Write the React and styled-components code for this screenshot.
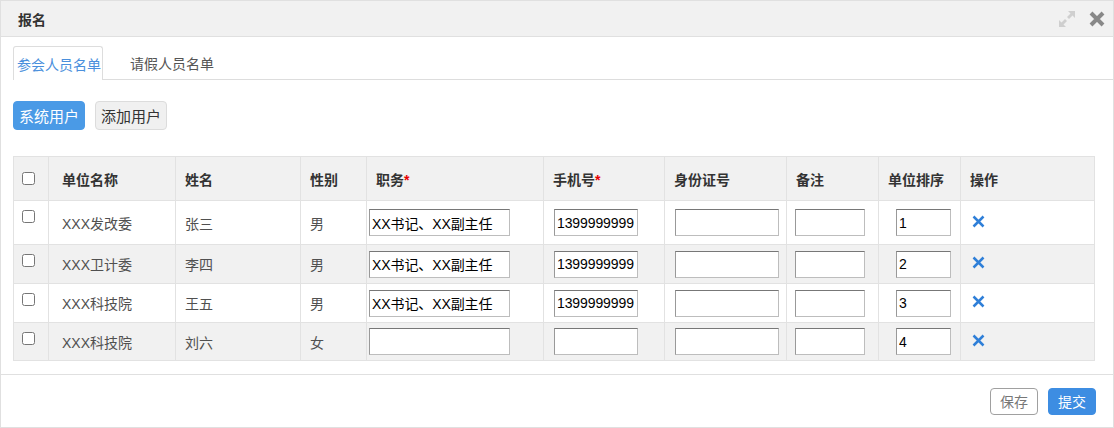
import React from "react";
import styled, { createGlobalStyle } from "styled-components";

const GlobalStyle = createGlobalStyle`
  body {
    margin: 0;
    font-family: "Liberation Sans", "Noto Sans CJK SC", sans-serif;
    background: #fff;
  }
`;

const Dialog = styled.div`
  width: 1114px;
  height: 428px;
  box-sizing: border-box;
  border: 1px solid #e0e0e0;
  display: flex;
  flex-direction: column;
  background: #fff;
`;

const Header = styled.div`
  height: 35px;
  background: #f1f1f1;
  border-bottom: 1px solid #e0e0e0;
  display: flex;
  align-items: center;
  justify-content: space-between;
  padding: 0 7px 0 17px;
`;

const Title = styled.div`
  font-size: 14px;
  font-weight: bold;
  color: #333;
`;

const HeaderTools = styled.div`
  display: flex;
  align-items: center;
  gap: 12px;
`;

const Content = styled.div`
  flex: 1;
  display: flex;
  flex-direction: column;
  padding-top: 9px;
`;

const TabBar = styled.div`
  display: flex;
  height: 34px;
  padding-left: 12px;
`;

const ActiveTab = styled.div`
  display: flex;
  align-items: center;
  font-size: 14px;
  padding: 0 1px 0 3px;
  color: #4a8fdc;
  border: 1px solid #dddddd;
  border-bottom: none;
  border-radius: 3px 3px 0 0;
  box-sizing: border-box;
`;

const Tab = styled.div`
  display: flex;
  align-items: center;
  font-size: 14px;
  padding: 0 14px 0 27px;
  color: #555;
  border-bottom: 1px solid #dddddd;
  box-sizing: border-box;
`;

const TabFill = styled.div`
  flex: 1;
  border-bottom: 1px solid #dddddd;
`;

const Toolbar = styled.div`
  display: flex;
  gap: 10px;
  margin: 21px 0 0 12px;
`;

const ToolButton = styled.button`
  height: 29px;
  padding: 0 5px;
  font-family: inherit;
  font-size: 15px;
  border-radius: 4px;
  cursor: pointer;
  background: ${(p) => (p.$primary ? "#4a9ae6" : "#f0f0f0")};
  color: ${(p) => (p.$primary ? "#fff" : "#333")};
  border: 1px solid ${(p) => (p.$primary ? "#4a9ae6" : "#dcdcdc")};
`;

const Table = styled.table`
  margin: 26px 0 0 12px;
  width: 1081px;
  table-layout: fixed;
  border-collapse: collapse;
  border: 1px solid #e2e2e2;
`;

const Th = styled.th`
  height: 43px;
  padding: 0 0 0 ${(p) => p.$pl || 9}px;
  text-align: left;
  font-size: 14px;
  font-weight: bold;
  color: #333;
  background: #f1f1f1;
  border: 1px solid #e2e2e2;
`;

const Req = styled.span`
  color: #e60000;
`;

const Tr = styled.tr`
  background: ${(p) => (p.$odd ? "#f1f1f1" : "#fff")};
`;

const Td = styled.td`
  height: ${(p) => p.$h}px;
  padding: 0 0 0 ${(p) => p.$pl ?? 9}px;
  font-size: 14px;
  color: #505050;
  border: 1px solid #e2e2e2;
  vertical-align: middle;
`;

const CheckTd = styled.td`
  padding: 9px 0 0 8px;
  vertical-align: top;
  border: 1px solid #e2e2e2;
`;

const CheckTh = styled.th`
  padding: 0 0 0 8px;
  text-align: left;
  background: #f1f1f1;
  border: 1px solid #e2e2e2;
`;

const Check = styled.input`
  margin: 0;
  width: 13px;
  height: 13px;
  display: block;
`;

const CellInput = styled.input`
  width: ${(p) => p.$w}px;
  height: 27px;
  box-sizing: border-box;
  padding: 0 2px;
  font-family: "Liberation Sans", "Noto Sans CJK SC", sans-serif;
  font-size: 14px;
  letter-spacing: -0.1px;
  color: #000;
  background: #fff;
  border: 1px solid #bdbdbd;
  border-top-color: #777;
  border-left-color: #999;
  outline: none;
  display: block;
`;

const Footer = styled.div`
  height: 52px;
  border-top: 1px solid #e0e0e0;
  display: flex;
  justify-content: flex-end;
  align-items: center;
  gap: 10px;
  padding-right: 17px;
`;

const FootButton = styled.button`
  width: 48px;
  height: 27px;
  padding: 0;
  font-family: inherit;
  font-size: 14px;
  border-radius: 4px;
  cursor: pointer;
  background: ${(p) => (p.$primary ? "#3d8de2" : "#fff")};
  color: ${(p) => (p.$primary ? "#fff" : "#777")};
  border: 1px solid ${(p) => (p.$primary ? "#3d8de2" : "#a0a0a0")};
`;

const ExpandIcon = () => (
  <svg width="18" height="18" viewBox="0 0 18 18">
    <g fill="#cfcfcf">
      <polygon points="17,1 10,1 12.5,3.5 9,7 11,9 14.5,5.5 17,8" />
      <polygon points="1,17 8,17 5.5,14.5 9,11 7,9 3.5,12.5 1,10" />
    </g>
  </svg>
);

const CloseIcon = ({ color = "#888", size = 18, width = 4 }) => (
  <svg width={size} height={size} viewBox="0 0 18 18">
    <path d="M3 3 L15 15 M15 3 L3 15" stroke={color} strokeWidth={width} />
  </svg>
);

const rows = [
  { unit: "XXX发改委", name: "张三", sex: "男", job: "XX书记、XX副主任", phone: "1399999999", order: "1", h: 43 },
  { unit: "XXX卫计委", name: "李四", sex: "男", job: "XX书记、XX副主任", phone: "1399999999", order: "2", h: 38 },
  { unit: "XXX科技院", name: "王五", sex: "男", job: "XX书记、XX副主任", phone: "1399999999", order: "3", h: 38 },
  { unit: "XXX科技院", name: "刘六", sex: "女", job: "", phone: "", order: "4", h: 37 },
];

export default function App() {
  return (
    <>
      <GlobalStyle />
      <Dialog>
        <Header>
          <Title>报名</Title>
          <HeaderTools>
            <ExpandIcon />
            <CloseIcon />
          </HeaderTools>
        </Header>
        <Content>
          <TabBar>
            <ActiveTab>参会人员名单</ActiveTab>
            <Tab>请假人员名单</Tab>
            <TabFill />
          </TabBar>
          <Toolbar>
            <ToolButton $primary>系统用户</ToolButton>
            <ToolButton>添加用户</ToolButton>
          </Toolbar>
          <Table>
            <colgroup>
              <col style={{ width: 35 }} />
              <col style={{ width: 127 }} />
              <col style={{ width: 125 }} />
              <col style={{ width: 66 }} />
              <col style={{ width: 177 }} />
              <col style={{ width: 121 }} />
              <col style={{ width: 122 }} />
              <col style={{ width: 92 }} />
              <col style={{ width: 82 }} />
              <col style={{ width: 134 }} />
            </colgroup>
            <thead>
              <tr>
                <CheckTh>
                  <Check type="checkbox" />
                </CheckTh>
                <Th $pl={13}>单位名称</Th>
                <Th>姓名</Th>
                <Th>性别</Th>
                <Th>
                  职务<Req>*</Req>
                </Th>
                <Th>
                  手机号<Req>*</Req>
                </Th>
                <Th>身份证号</Th>
                <Th>备注</Th>
                <Th>单位排序</Th>
                <Th>操作</Th>
              </tr>
            </thead>
            <tbody>
              {rows.map((r, i) => (
                <Tr key={i} $odd={i % 2 === 1}>
                  <CheckTd>
                    <Check type="checkbox" />
                  </CheckTd>
                  <Td $h={r.h} $pl={13}>{r.unit}</Td>
                  <Td $h={r.h}>{r.name}</Td>
                  <Td $h={r.h}>{r.sex}</Td>
                  <Td $h={r.h} $pl={2}>
                    <CellInput $w={141} defaultValue={r.job} />
                  </Td>
                  <Td $h={r.h} $pl={10}>
                    <CellInput $w={84} defaultValue={r.phone} />
                  </Td>
                  <Td $h={r.h} $pl={10}>
                    <CellInput $w={104} defaultValue="" />
                  </Td>
                  <Td $h={r.h} $pl={8}>
                    <CellInput $w={70} defaultValue="" />
                  </Td>
                  <Td $h={r.h} $pl={17}>
                    <CellInput $w={55} defaultValue={r.order} />
                  </Td>
                  <Td $h={r.h} $pl={10}>
                    <CloseIcon color="#2f7fd8" size={15} width={3} />
                  </Td>
                </Tr>
              ))}
            </tbody>
          </Table>
        </Content>
        <Footer>
          <FootButton>保存</FootButton>
          <FootButton $primary>提交</FootButton>
        </Footer>
      </Dialog>
    </>
  );
}
